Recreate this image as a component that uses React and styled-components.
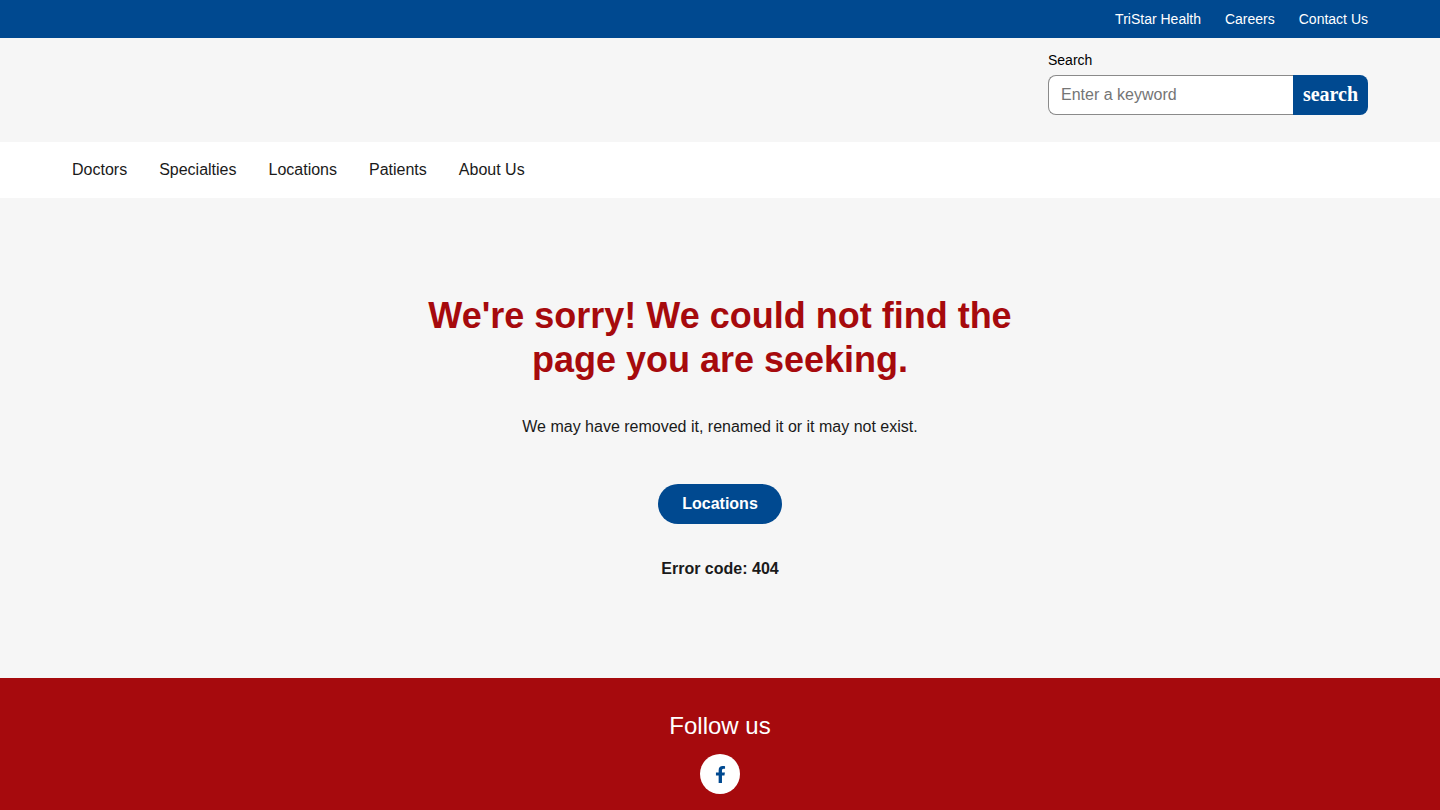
import React from "react";
import styled, { createGlobalStyle } from "styled-components";
import { FaFacebookF } from "react-icons/fa";

const GlobalStyle = createGlobalStyle`
  html, body {
    margin: 0;
    padding: 0;
    background: #f6f6f6;
    overflow: hidden;
  }
  body {
    font-family: "Liberation Sans", Arial, sans-serif;
    color: #1a1a1a;
  }
  * { box-sizing: border-box; }
`;

const Page = styled.div`
  height: 810px;
  overflow: hidden;
  display: flex;
  flex-direction: column;
`;

const TopBar = styled.div`
  height: 38px;
  background: #004990;
  display: flex;
  justify-content: flex-end;
  align-items: center;
  gap: 24px;
  padding: 0 72px;
`;

const TopLink = styled.a`
  color: #fff;
  font-size: 14px;
`;

const Header = styled.header`
  height: 104px;
  display: flex;
  justify-content: flex-end;
  padding: 14px 72px 0;
`;

const SearchForm = styled.form`
  width: 320px;
  margin: 0;
`;

const SearchLabel = styled.label`
  display: block;
  height: 23px;
  font-size: 14px;
  line-height: 16px;
  color: #000;
`;

const SearchRow = styled.div`
  display: flex;
  height: 40px;
`;

const SearchInput = styled.input`
  flex: 1;
  min-width: 0;
  height: 40px;
  border: 1px solid #8a8a8a;
  border-right: 0;
  border-radius: 8px 0 0 8px;
  background: #fff;
  padding: 0 12px;
  font: 16px "Liberation Sans", Arial, sans-serif;
  outline: none;

  &::placeholder {
    color: #757575;
    opacity: 1;
  }
`;

const SearchButton = styled.button`
  width: 75px;
  height: 40px;
  border: 0;
  padding: 0 0 2px;
  border-radius: 0 8px 8px 0;
  background: #004990;
  color: #fff;
  font: bold 20px "Liberation Serif", "Times New Roman", serif;
`;

const Nav = styled.nav`
  height: 56px;
  background: #fff;
  display: flex;
  align-items: center;
  gap: 32px;
  padding: 0 72px;
`;

const NavLink = styled.a`
  font-size: 16px;
  color: #1a1a1a;
`;

const Main = styled.main`
  height: 480px;
  display: flex;
  flex-direction: column;
  align-items: center;
  padding-top: 96px;
  text-align: center;
`;

const Title = styled.h1`
  width: 640px;
  margin: 0;
  font-size: 36px;
  line-height: 44px;
  font-weight: 700;
  color: #a60a0d;
`;

const Message = styled.p`
  margin: 35px 0 0;
  font-size: 16px;
  line-height: 20px;
  color: #1a1a1a;
`;

const PillButton = styled.a`
  margin-top: 47px;
  width: 124px;
  height: 40px;
  border-radius: 20px;
  background: #004990;
  color: #fff;
  font-size: 16px;
  font-weight: 700;
  display: flex;
  align-items: center;
  justify-content: center;
`;

const ErrorCode = styled.p`
  margin: 35px 0 0;
  font-size: 16px;
  line-height: 20px;
  font-weight: 700;
  color: #1a1a1a;
`;

const Footer = styled.footer`
  flex: 1;
  background: #a60a0d;
  display: flex;
  flex-direction: column;
  align-items: center;
  padding-top: 34px;
`;

const FollowTitle = styled.h2`
  margin: 0;
  height: 42px;
  font-size: 24px;
  line-height: 28px;
  font-weight: 400;
  color: #fff;
`;

const SocialLink = styled.a`
  width: 40px;
  height: 40px;
  border-radius: 50%;
  background: #fff;
  color: #004990;
  display: flex;
  align-items: center;
  justify-content: center;
  font-size: 17px;
`;

const App = () => {
  return (
    <Page>
      <GlobalStyle />
      <TopBar>
        <TopLink>TriStar Health</TopLink>
        <TopLink>Careers</TopLink>
        <TopLink>Contact Us</TopLink>
      </TopBar>
      <Header>
        <SearchForm onSubmit={(e) => e.preventDefault()}>
          <SearchLabel htmlFor="q">Search</SearchLabel>
          <SearchRow>
            <SearchInput id="q" placeholder="Enter a keyword" />
            <SearchButton type="submit">search</SearchButton>
          </SearchRow>
        </SearchForm>
      </Header>
      <Nav>
        <NavLink>Doctors</NavLink>
        <NavLink>Specialties</NavLink>
        <NavLink>Locations</NavLink>
        <NavLink>Patients</NavLink>
        <NavLink>About Us</NavLink>
      </Nav>
      <Main>
        <Title>We're sorry! We could not find the page you are seeking.</Title>
        <Message>We may have removed it, renamed it or it may not exist.</Message>
        <PillButton>Locations</PillButton>
        <ErrorCode>Error code: 404</ErrorCode>
      </Main>
      <Footer>
        <FollowTitle>Follow us</FollowTitle>
        <SocialLink aria-label="Facebook">
          <FaFacebookF />
        </SocialLink>
      </Footer>
    </Page>
  );
};

export default App;
